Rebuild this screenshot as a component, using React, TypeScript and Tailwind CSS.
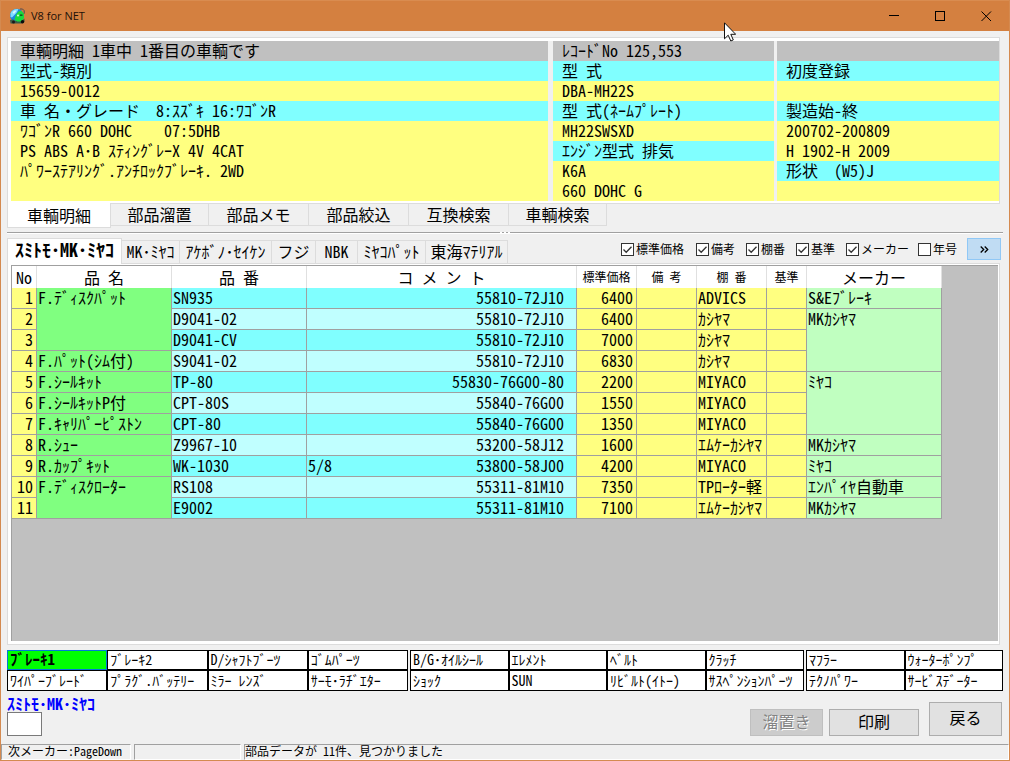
import React from "react";

type Tone = "gray" | "cyan" | "yellow";

const toneClass: Record<Tone, string> = {
  gray: "bg-[#c0c0c0]",
  cyan: "bg-[#80ffff]",
  yellow: "bg-[#ffff80]",
};

const vehicleColumns: { tone: Tone; text: string }[][] = [
  [
    { tone: "gray", text: "車輌明細 1車中 1番目の車輌です" },
    { tone: "cyan", text: "型式-類別" },
    { tone: "yellow", text: "15659-0012" },
    { tone: "cyan", text: "車 名・グレード　8:ｽｽﾞｷ 16:ﾜｺﾞﾝR" },
    { tone: "yellow", text: "ﾜｺﾞﾝR 660 DOHC    07:5DHB" },
    { tone: "yellow", text: "PS ABS A･B ｽﾃｨﾝｸﾞﾚｰX 4V 4CAT" },
    { tone: "yellow", text: "ﾊﾟﾜｰｽﾃｱﾘﾝｸﾞ.ｱﾝﾁﾛｯｸﾌﾞﾚｰｷ. 2WD" },
    { tone: "yellow", text: "" },
  ],
  [
    { tone: "gray", text: "ﾚｺｰﾄﾞNo 125,553" },
    { tone: "cyan", text: "型 式" },
    { tone: "yellow", text: "DBA-MH22S" },
    { tone: "cyan", text: "型 式(ﾈｰﾑﾌﾟﾚｰﾄ)" },
    { tone: "yellow", text: "MH22SWSXD" },
    { tone: "cyan", text: "ｴﾝｼﾞﾝ型式 排気" },
    { tone: "yellow", text: "K6A" },
    { tone: "yellow", text: "660 DOHC G" },
  ],
  [
    { tone: "gray", text: "" },
    { tone: "cyan", text: "初度登録" },
    { tone: "yellow", text: "" },
    { tone: "cyan", text: "製造始-終" },
    { tone: "yellow", text: "200702-200809" },
    { tone: "yellow", text: "H 1902-H 2009" },
    { tone: "cyan", text: "形状  (W5)J" },
    { tone: "yellow", text: "" },
  ],
];

const pageTabs = [
  { label: "部品溜置", width: "w-[98px]" },
  { label: "部品メモ", width: "w-[100px]" },
  { label: "部品絞込", width: "w-[100px]" },
  { label: "互換検索", width: "w-[100px]" },
  { label: "車輌検索", width: "w-[98px]" },
];

const makerTabs = [
  { label: "MK･ﾐﾔｺ", width: "w-[58px]" },
  { label: "ｱｹﾎﾞﾉ･ｾｲｹﾝ", width: "w-[92px]" },
  { label: "フジ", width: "w-11" },
  { label: "NBK", width: "w-[42px]" },
  { label: "ﾐﾔｺﾊﾟｯﾄ", width: "w-[68px]" },
  { label: "東海ﾏﾃﾘｱﾙ", width: "w-[82px]" },
];

const columnToggles = [
  { label: "標準価格", checked: true, width: "w-[75px]" },
  { label: "備考", checked: true, width: "w-[50px]" },
  { label: "棚番", checked: true, width: "w-[50px]" },
  { label: "基準", checked: true, width: "w-[50px]" },
  { label: "メーカー", checked: true, width: "w-[72px]" },
  { label: "年号", checked: false, width: "w-[49px]" },
];

interface Part {
  name?: string;
  nameSpan?: number;
  code: string;
  note?: string;
  oem: string;
  price: number;
  shelf: string;
  maker?: string;
  makerSpan?: number;
}

const parts: Part[] = [
  { name: "F.ﾃﾞｨｽｸﾊﾟｯﾄ", nameSpan: 3, code: "SN935", oem: "55810-72J10", price: 6400, shelf: "ADVICS", maker: "S&Eﾌﾞﾚｰｷ" },
  { code: "D9041-02", oem: "55810-72J10", price: 6400, shelf: "ｶｼﾔﾏ", maker: "MKｶｼﾔﾏ", makerSpan: 3 },
  { code: "D9041-CV", oem: "55810-72J10", price: 7000, shelf: "ｶｼﾔﾏ" },
  { name: "F.ﾊﾟｯﾄ(ｼﾑ付)", code: "S9041-02", oem: "55810-72J10", price: 6830, shelf: "ｶｼﾔﾏ" },
  { name: "F.ｼｰﾙｷｯﾄ", code: "TP-80", oem: "55830-76G00-80", price: 2200, shelf: "MIYACO", maker: "ﾐﾔｺ", makerSpan: 3 },
  { name: "F.ｼｰﾙｷｯﾄP付", code: "CPT-80S", oem: "55840-76G00", price: 1550, shelf: "MIYACO" },
  { name: "F.ｷｬﾘﾊﾟｰﾋﾟｽﾄﾝ", code: "CPT-80", oem: "55840-76G00", price: 1350, shelf: "MIYACO" },
  { name: "R.ｼｭｰ", code: "Z9967-10", oem: "53200-58J12", price: 1600, shelf: "ｴﾑｹｰｶｼﾔﾏ", maker: "MKｶｼﾔﾏ" },
  { name: "R.ｶｯﾌﾟｷｯﾄ", code: "WK-1030", note: "5/8", oem: "53800-58J00", price: 4200, shelf: "MIYACO", maker: "ﾐﾔｺ" },
  { name: "F.ﾃﾞｨｽｸﾛｰﾀｰ", nameSpan: 2, code: "RS108", oem: "55311-81M10", price: 7350, shelf: "TPﾛｰﾀｰ軽", maker: "ｴﾝﾊﾟｲﾔ自動車" },
  { code: "E9002", oem: "55311-81M10", price: 7100, shelf: "ｴﾑｹｰｶｼﾔﾏ", maker: "MKｶｼﾔﾏ" },
];

const categoryGroups = [
  {
    grid: "grid grid-cols-4 grid-rows-[20px_21px] flex-[401]",
    items: ["ﾌﾞﾚｰｷ1", "ﾌﾞﾚｰｷ2", "D/ｼｬﾌﾄﾌﾞｰﾂ", "ｺﾞﾑﾊﾟｰﾂ", "ﾜｲﾊﾟｰﾌﾞﾚｰﾄﾞ", "ﾌﾟﾗｸﾞ.ﾊﾞｯﾃﾘｰ", "ﾐﾗｰ ﾚﾝｽﾞ", "ｻｰﾓ･ﾗﾁﾞｴﾀｰ"],
  },
  {
    grid: "grid grid-cols-4 grid-rows-[20px_21px] flex-[394]",
    items: ["B/G･ｵｲﾙｼｰﾙ", "ｴﾚﾒﾝﾄ", "ﾍﾞﾙﾄ", "ｸﾗｯﾁ", "ｼｮｯｸ", "SUN", "ﾘﾋﾞﾙﾄ(ｲﾄｰ)", "ｻｽﾍﾟﾝｼｮﾝﾊﾟｰﾂ"],
  },
  {
    grid: "grid grid-cols-2 grid-rows-[20px_21px] flex-[197]",
    items: ["ﾏﾌﾗｰ", "ｳｫｰﾀｰﾎﾟﾝﾌﾟ", "ﾃｸﾉﾊﾟﾜｰ", "ｻｰﾋﾞｽﾃﾞｰﾀｰ"],
  },
];

function AppIcon() {
  return (
    <svg viewBox="0 0 16 16" className="size-4" aria-hidden="true">
      <circle cx="7.8" cy="7.500" r="6.800" fill="#1a86dc" />
      <path d="M1.500 5.500C2.500 2 6 .3 9.500 1.200L7.500 5 3 9.500 1.500 9z" fill="#7fdcff" />
      <path d="M3.500 4.200L6 2.200l1.300.8L5 6z" fill="#d8f7ff" />
      <path d="M7.500 6l2-2.500 2.700-.8 2.600 2.800.3 4.500-2 2.500-4.600 1.300-3-1.800.7-3z" fill="#19dc3c" />
      <path d="M11 1h2.500l1.700 1.700v3" fill="none" stroke="#4b4b55" strokeWidth="1" />
      <path d="M1 12l3-.6 3 1.600 6-.5 2.500-2v3.500L13 15.500H1.500z" fill="#3c5a48" />
      <path d="M8 11.500l4-.5 2 .8-2.500 1.700H8z" fill="#19dc3c" />
      <circle cx="4.500" cy="14" r="1.500" fill="#1a1a1a" />
      <circle cx="13.500" cy="13.700" r="1.700" fill="#0a0a0a" />
      <circle cx="9" cy="7.500" r=".9" fill="#f0fff0" />
      <path d="M11 6.500h2.500v1.300H11z" fill="#10401c" />
    </svg>
  );
}

function TitleBar() {
  return (
    <header className="flex h-[31px] shrink-0 items-center border-t border-[#d98c50] bg-[#d48040] pl-2">
      <AppIcon />
      <h1 className="ml-1.5 flex-1 font-['Open_Sans','Noto_Sans',sans-serif] text-[11px] font-normal text-[#1c1008]">V8 for NET</h1>
      <button type="button" aria-label="最小化" className="grid h-full w-[46px] place-items-center">
        <svg viewBox="0 0 11 11" className="size-[11px]" stroke="#000" fill="none" shapeRendering="crispEdges">
          <path d="M0 4.500h10" />
        </svg>
      </button>
      <button type="button" aria-label="最大化" className="grid h-full w-[46px] place-items-center">
        <svg viewBox="0 0 11 11" className="size-[11px]" stroke="#000" fill="none" shapeRendering="crispEdges">
          <path d="M.5.5h9v9h-9z" />
        </svg>
      </button>
      <button type="button" aria-label="閉じる" className="grid h-full w-[46px] place-items-center">
        <svg viewBox="0 0 11 11" className="size-[11px]" stroke="#000" fill="none">
          <path d="M.5.5l9.500 9.500M10 .5L.5 10" />
        </svg>
      </button>
    </header>
  );
}

function VehiclePanel() {
  return (
    <section>
      <div className="mr-[3px] border border-[#dcdcdc] bg-white p-[3px] pr-0 pb-0.5">
        <div className="flex bg-[#f0f0f0]">
          {vehicleColumns.map((column, i) => (
            <div key={i} className={["flex-[537]", "ml-[5px] flex-[221]", "ml-[3px] flex-[222]"][i]}>
              {column.map((line, j) => (
                <div key={j} className={`h-5 pl-[9px] leading-[18px] whitespace-pre ${toneClass[line.tone]}`}>
                  {line.text}
                </div>
              ))}
            </div>
          ))}
        </div>
      </div>
      <div role="tablist" className="-mt-px flex items-start">
        <button type="button" role="tab" aria-selected="true" className="relative h-[25px] w-[104px] border border-t-0 border-[#dcdcdc] bg-white leading-5">
          車輌明細
        </button>
        {pageTabs.map((tab) => (
          <button key={tab.label} type="button" role="tab" aria-selected="false" className={`h-[23px] border border-l-0 border-[#dcdcdc] pb-0.5 leading-5 ${tab.width}`}>
            {tab.label}
          </button>
        ))}
      </div>
    </section>
  );
}

function Splitter() {
  return (
    <div role="separator" className="mt-1 flex h-0.5 items-center justify-center gap-0.5 border-t border-b border-t-[#a0a0a0] border-b-white">
      <span className="size-0.5 bg-white" />
      <span className="size-0.5 bg-white" />
      <span className="size-0.5 bg-white" />
    </div>
  );
}

function ColumnToggle({ label, checked, width }: { label: string; checked: boolean; width: string }) {
  return (
    <label className={`flex items-center gap-0.5 text-xs ${width}`}>
      <span className="grid size-[13px] shrink-0 place-items-center">
        <input
          type="checkbox"
          defaultChecked={checked}
          className="peer col-start-1 row-start-1 size-[13px] appearance-none border border-[#333] bg-white"
        />
        <svg viewBox="0 0 13 13" className="pointer-events-none col-start-1 row-start-1 hidden size-[13px] peer-checked:block" fill="none" stroke="#333" strokeWidth="1.3">
          <path d="M2.500 6.500l2.700 2.800 5.300-5.600" />
        </svg>
      </span>
      <span className="whitespace-nowrap">{label}</span>
    </label>
  );
}

const headBase = "h-[22px] border-r border-[#e0e0e0] bg-white p-0 leading-5 font-light whitespace-pre";
const cellBase = "h-[21px] border-r border-b border-[#a0a0a0] py-0 pr-[3px] pl-px align-top leading-[19px] whitespace-nowrap";

function PartsTable() {
  return (
    <table className="w-[930px] table-fixed border-separate border-spacing-0">
      <colgroup>
        <col className="w-[25px]" />
        <col className="w-[135px]" />
        <col className="w-[135px]" />
        <col className="w-[270px]" />
        <col className="w-[60px]" />
        <col className="w-[60px]" />
        <col className="w-[70px]" />
        <col className="w-10" />
        <col className="w-[135px]" />
      </colgroup>
      <thead>
        <tr>
          <th className={headBase}>No</th>
          <th className={headBase}>品 名</th>
          <th className={headBase}>品 番</th>
          <th className={headBase}>コ メ ン ト</th>
          <th className={`${headBase} text-xs leading-5`}>標準価格</th>
          <th className={`${headBase} text-xs leading-5`}>備 考</th>
          <th className={`${headBase} text-xs leading-5`}>棚 番</th>
          <th className={`${headBase} text-xs leading-5`}>基準</th>
          <th className={headBase}>メーカー</th>
        </tr>
      </thead>
      <tbody>
        {parts.map((part, i) => {
          const stripe = i % 2 === 0 ? "bg-[#80ffff]" : "bg-[#c0ffff]";
          return (
            <tr key={part.code}>
              <td className={`${cellBase} bg-[#ffff80] text-right`}>{i + 1}</td>
              {part.name && (
                <td rowSpan={part.nameSpan ?? 1} className={`${cellBase} bg-[#80ff80]`}>
                  {part.name}
                </td>
              )}
              <td className={`${cellBase} ${stripe}`}>{part.code}</td>
              <td className={`${cellBase} ${stripe}`}>
                <div className="flex justify-between pr-[9px]">
                  <span>{part.note}</span>
                  <span>{part.oem}</span>
                </div>
              </td>
              <td className={`${cellBase} bg-[#ffff80] text-right`}>{part.price}</td>
              <td className={`${cellBase} bg-[#ffff80]`} />
              <td className={`${cellBase} bg-[#ffff80]`}>{part.shelf}</td>
              <td className={`${cellBase} bg-[#ffff80]`} />
              {part.maker && (
                <td rowSpan={part.makerSpan ?? 1} className={`${cellBase} bg-[#c0ffc0]`}>
                  {part.maker}
                </td>
              )}
            </tr>
          );
        })}
      </tbody>
    </table>
  );
}

function PartsPanel() {
  return (
    <section className="flex flex-1 flex-col pt-1">
      <div className="flex h-[25px] items-end">
        <div role="tablist" className="flex items-end">
          <button type="button" role="tab" aria-selected="true" className="relative -mb-px h-[26px] w-[115px] border border-b-0 border-[#dcdcdc] bg-white pb-1.5 text-lg leading-5 font-bold">
            ｽﾐﾄﾓ･MK･ﾐﾔｺ
          </button>
          {makerTabs.map((tab) => (
            <button key={tab.label} type="button" role="tab" aria-selected="false" className={`h-[23px] border border-b-0 border-l-0 border-[#dcdcdc] pb-1 leading-5 whitespace-nowrap ${tab.width}`}>
              {tab.label}
            </button>
          ))}
        </div>
        <div className="ml-auto flex items-center self-start">
          {columnToggles.map((toggle) => (
            <ColumnToggle key={toggle.label} {...toggle} />
          ))}
          <button type="button" aria-label="列を表示" className="mr-0.5 grid h-[22px] w-[34px] place-items-center border border-[#90c8f6] bg-[#c0dcf3]">
            <svg viewBox="0 0 9 7" className="h-[7px] w-[9px]" fill="none" stroke="#000" strokeWidth="1.3">
              <path d="M.7.5l3 3-3 3M4.700.5l3 3-3 3" />
            </svg>
          </button>
        </div>
      </div>
      <div className="mr-[3px] flex flex-1 flex-col border border-[#dcdcdc] bg-white p-[3px] pt-px pr-px">
        <div className="flex-1 border-t border-l border-[#a0a0a0] bg-[#c0c0c0]">
          <PartsTable />
        </div>
      </div>
    </section>
  );
}

function CategoryBar() {
  return (
    <nav className="mt-[5px] flex gap-0.5 text-sm leading-4">
      {categoryGroups.map((group, g) => (
        <div key={g} className={group.grid}>
          {group.items.map((item, i) => (
            <button
              key={item}
              type="button"
              className={
                g === 0 && i === 0
                  ? "border border-[#0078d7] bg-[#00ff00] pb-0.5 pl-0.5 text-left text-[15px] leading-4 font-bold whitespace-nowrap"
                  : "border border-black bg-white pb-0.5 pl-0.5 text-left whitespace-nowrap"
              }
            >
              {item}
            </button>
          ))}
        </div>
      ))}
    </nav>
  );
}

function ActionBar() {
  return (
    <div className="flex items-end pt-1 pr-px pb-2">
      <div className="flex flex-1 flex-col items-start">
        <label htmlFor="maker-code" className="h-[17px] text-base leading-4 font-bold text-[#0000ff]">
          ｽﾐﾄﾓ･MK･ﾐﾔｺ
        </label>
        <input id="maker-code" type="text" className="h-6 w-[35px] border border-[#7a7a7a] bg-white px-1 outline-none" />
      </div>
      <button type="button" disabled className="h-[27px] w-[73px] border border-[#bfbfbf] bg-[#cccccc] pb-1 leading-5 text-[#838383] [text-shadow:1px_1px_0_#fff]">
        溜置き
      </button>
      <button type="button" className="ml-1.5 h-[27px] w-[90px] border border-[#adadad] bg-[#e1e1e1] pb-1 leading-5">
        印刷
      </button>
      <button type="button" className="ml-2.5 h-[34px] w-[73px] border border-[#adadad] bg-[#e1e1e1] pb-1 leading-5">
        戻る
      </button>
    </div>
  );
}

function StatusBar() {
  return (
    <footer className="flex h-4 gap-[3px] bg-[#f0f0f0] text-xs">
      <div className="w-[130px] border border-t-[#a0a0a0] border-r-white border-b-white border-l-[#a0a0a0] pl-1.5 leading-3 whitespace-nowrap">
        次メーカー:PageDown
      </div>
      <div className="w-[107px] border border-t-[#a0a0a0] border-r-white border-b-white border-l-[#a0a0a0]" />
      <div className="flex-1 border border-t-[#a0a0a0] border-r-white border-b-white border-l-[#a0a0a0] leading-3">
        部品データが 11件、見つかりました
      </div>
    </footer>
  );
}

export default function App() {
  return (
    <div className="relative flex min-h-screen flex-col border-x border-b border-[#d48a50] bg-[#f0f0f0] font-['Noto_Sans_Mono_CJK_JP','Noto_Sans_CJK_JP',monospace] text-base font-light text-black">
      <TitleBar />
      <main className="flex flex-1 flex-col px-1.5 pt-1.5">
        <VehiclePanel />
        <Splitter />
        <PartsPanel />
        <CategoryBar />
        <ActionBar />
      </main>
      <StatusBar />
      <svg viewBox="0 0 12 20" className="pointer-events-none absolute top-[22px] left-[723px] h-5 w-3" fill="#fff" stroke="#111" aria-hidden="true">
        <path d="M.5.8v16l3.700-3.600 2.600 5.800 2.500-1.100-2.500-5.600h4.900z" />
      </svg>
    </div>
  );
}
